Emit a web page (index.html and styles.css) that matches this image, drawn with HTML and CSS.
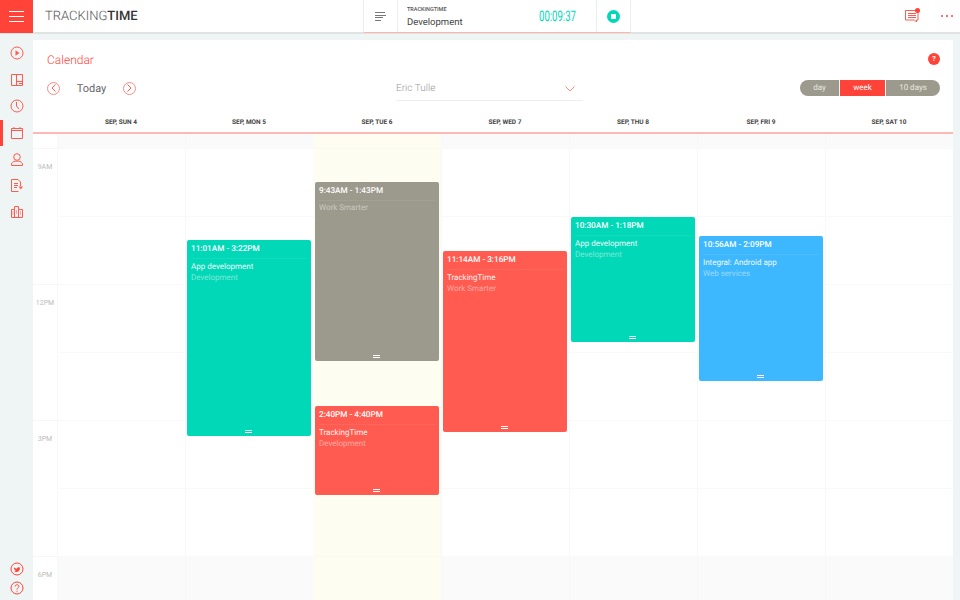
FILE: index.html
```html
<!DOCTYPE html>
<html lang="en">
<head>
  <meta charset="UTF-8" />
  <title>TrackingTime Calendar</title>
  <link rel="stylesheet" href="styles.css">
</head>
<body>

<!-- Top bar -->
<header class="topbar">
  <a class="menu-btn">
    <svg width="15" height="11" viewBox="0 0 15 11"><path d="M0 .5h15M0 5.500h15M0 10.500h15" stroke="#fff" stroke-width="1"/></svg>
  </a>
  <div class="logo">TRACKING<b>TIME</b></div>
  <div class="timer">
    <div class="timer-list">
      <svg width="11" height="9" viewBox="0 0 11 9"><path d="M0 .5h10M0 3.500h11M0 5.500h8M0 8.500h6" stroke="#777" stroke-width="1"/></svg>
    </div>
    <div class="timer-info">
      <div class="timer-project">TRACKINGTIME</div>
      <div class="timer-task">Development</div>
    </div>
    <div class="timer-clock">00:09:37</div>
    <div class="timer-stop"><span class="stop-dot"><span class="stop-square"></span></span></div>
  </div>
  <div class="top-actions">
    <span class="notes">
      <svg width="14" height="13" viewBox="0 0 14 13"><path d="M.5.5h12.500v9.500h-1.500v2l-2-2H.5zM3 3.500h8M3 5.500h8M3 7.500h8" fill="none" stroke="#ff5b50" stroke-width="1"/></svg>
      <span class="notes-dot"></span>
    </span>
    <span class="more"><i></i><i></i><i></i></span>
  </div>
</header>

<div class="main">
  <!-- Sidebar -->
  <nav class="sidebar">
    <a class="side-item">
      <svg width="14" height="14" viewBox="0 0 14 14"><circle cx="7" cy="7" r="6" fill="none" stroke="#ff5b50"/><path d="M5.500 4.200l4 2.800-4 2.800z" fill="#ff5b50"/></svg>
    </a>
    <a class="side-item">
      <svg width="12" height="12" viewBox="0 0 12 12"><path d="M.5.5h11v11H.5zM5.500.5v11M5.500 7.500h6M8 9.500h3.500" fill="none" stroke="#ff5b50"/></svg>
    </a>
    <a class="side-item">
      <svg width="14" height="14" viewBox="0 0 14 14"><circle cx="7" cy="7" r="6" fill="none" stroke="#ff5b50"/><path d="M6.500 3v4l2.500 3" fill="none" stroke="#ff5b50"/></svg>
    </a>
    <a class="side-item active">
      <svg width="12" height="12" viewBox="0 0 12 12"><path d="M.5 1.500h11v10H.5zM.5 3.500h11M3 0v2M9 0v2" fill="none" stroke="#ff5b50"/></svg>
    </a>
    <a class="side-item">
      <svg width="12" height="13" viewBox="0 0 12 13"><circle cx="6" cy="4" r="3.300" fill="none" stroke="#ff5b50"/><path d="M.5 12.500v-1.500c0-1.500 2-2.500 3.500-2.800h4c1.500.3 3.500 1.300 3.500 2.800v1.500z" fill="none" stroke="#ff5b50"/></svg>
    </a>
    <a class="side-item">
      <svg width="12" height="13" viewBox="0 0 12 13"><path d="M9.500 7V3L7 .5H.5v12h7M3 4.500h4M3 6.500h4M3 8.500h3" fill="none" stroke="#ff5b50"/><path d="M7.500 7.500h4.500l-2.200 3z" fill="#ff5b50"/></svg>
    </a>
    <a class="side-item">
      <svg width="12" height="12" viewBox="0 0 12 12"><path d="M.5 11.500v-8h3v-3h4v3h4v8zM3.500 3.500v8M7.500 3.500v8M1.500 6h1M1.500 8h1M5 5h1M5 7h1M9 6h1M9 8h1" fill="none" stroke="#ff5b50"/></svg>
    </a>
    <div class="side-bottom">
      <svg width="14" height="14" viewBox="0 0 14 14"><circle cx="7" cy="7" r="6" fill="none" stroke="#ff4338"/><path d="M3.800 5c1 1.100 2 1.700 3.200 1.700 0-1.300 1.600-2 2.500-1l1-.4-.6 1c0 2.200-1.700 3.700-3.600 3.700-.9 0-1.700-.3-2.300-.7 1 0 1.600-.2 2.100-.7-1 0-1.500-.5-1.800-1.200h.8c-.9-.4-1.300-1-1.300-1.700l.7.200c-.7-.6-.9-1.300-.7-1.900z" fill="#ff4338"/></svg>
      <svg width="14" height="14" viewBox="0 0 14 14"><circle cx="7" cy="7" r="6" fill="none" stroke="#ff4338"/><path d="M5.200 5.500c0-2.300 3.600-2.300 3.600 0 0 1.400-1.800 1.500-1.800 3M7 9.700v1" fill="none" stroke="#ff4338"/></svg>
    </div>
  </nav>

  <!-- Calendar card -->
  <section class="card">
    <div class="card-head">
      <h1 class="card-title">Calendar</h1>
      <span class="help">?</span>
    </div>
    <div class="toolbar">
      <div class="date-nav">
        <span class="round-btn">
          <svg width="5" height="8" viewBox="0 0 5 8"><path d="M4.500.5L1 4l3.500 3.500" fill="none" stroke="#ff5b50"/></svg>
        </span>
        <span class="today">Today</span>
        <span class="round-btn">
          <svg width="5" height="8" viewBox="0 0 5 8"><path d="M.5.5L4 4 .5 7.500" fill="none" stroke="#ff5b50"/></svg>
        </span>
      </div>
      <div class="user-select">
        <span>Eric Tulle</span>
        <svg width="10" height="6" viewBox="0 0 10 6"><path d="M.5.500L5 5 9.500.500" fill="none" stroke="#ff8a82"/></svg>
      </div>
      <div class="range">
        <span class="range-day">day</span>
        <span class="range-week">week</span>
        <span class="range-ten">10 days</span>
      </div>
    </div>

    <div class="day-heads">
      <div class="gutter"></div>
      <div>SEP, SUN 4</div>
      <div>SEP, MON 5</div>
      <div>SEP, TUE 6</div>
      <div>SEP, WED 7</div>
      <div>SEP, THU 8</div>
      <div>SEP, FRI 9</div>
      <div>SEP, SAT 10</div>
    </div>

    <div class="grid">
      <div class="hours">
        <div class="hour">9AM</div>
        <div class="hour">12PM</div>
        <div class="hour">3PM</div>
        <div class="hour">6PM</div>
      </div>
      <div class="day"></div>
      <div class="day">
        <div class="event teal ev-mon">
          <div class="ev-time">11:01AM - 3:22PM</div>
          <div class="ev-name">App development</div>
          <div class="ev-sub">Development</div>
          <div class="ev-grip"></div>
        </div>
      </div>
      <div class="day today-col">
        <div class="event gray ev-tue1">
          <div class="ev-time">9:43AM - 1:43PM</div>
          <div class="ev-sub ev-first">Work Smarter</div>
          <div class="ev-grip"></div>
        </div>
        <div class="event red ev-tue2">
          <div class="ev-time">2:40PM - 4:40PM</div>
          <div class="ev-name">TrackingTime</div>
          <div class="ev-sub">Development</div>
          <div class="ev-grip"></div>
        </div>
      </div>
      <div class="day">
        <div class="event red ev-wed">
          <div class="ev-time">11:14AM - 3:16PM</div>
          <div class="ev-name">TrackingTime</div>
          <div class="ev-sub">Work Smarter</div>
          <div class="ev-grip"></div>
        </div>
      </div>
      <div class="day">
        <div class="event teal ev-thu">
          <div class="ev-time">10:30AM - 1:18PM</div>
          <div class="ev-name">App development</div>
          <div class="ev-sub">Development</div>
          <div class="ev-grip"></div>
        </div>
      </div>
      <div class="day">
        <div class="event blue ev-fri">
          <div class="ev-time">10:56AM - 2:09PM</div>
          <div class="ev-name">Integral: Android app</div>
          <div class="ev-sub">Web services</div>
          <div class="ev-grip"></div>
        </div>
      </div>
      <div class="day"></div>
    </div>
  </section>
</div>

</body>
</html>
```

FILE: styles.css
```css
body {
  margin: 0;
  height: 600px;
  overflow: hidden;
  font-family: Roboto, "Liberation Sans", sans-serif;
  text-rendering: geometricPrecision;
  background: #eff4f4;
  color: #555;
}

/* top bar */
.topbar {
  display: flex;
  height: 32px;
  background: #fff;
  border-bottom: 2px solid #dfe3e2;
}
.menu-btn {
  width: 33px;
  height: 33px;
  background: #ff4338;
  display: flex;
  align-items: center;
  justify-content: center;
  flex: none;
}
.logo {
  margin-left: 12px;
  width: 318px;
  line-height: 33px;
  font-size: 13px;
  font-weight: 300;
  color: #555;
}
.logo b {
  font-weight: 500;
  color: #333;
}
.timer {
  display: flex;
  width: 268px;
  height: 33px;
  box-sizing: border-box;
  border-left: 1px solid #eceeee;
  border-right: 1px solid #eceeee;
  border-bottom: 1px solid #ffb4ae;
  background: #fff;
}
.timer-list {
  width: 33px;
  display: flex;
  align-items: center;
  justify-content: center;
  border-right: 1px solid #eceeee;
  flex: none;
}
.timer-info {
  width: 132px;
  padding: 7px 0 0 9px;
}
.timer-project {
  font-size: 5.5px;
  font-weight: 500;
  color: #555;
  line-height: 7px;
}
.timer-task {
  font-size: 9.5px;
  line-height: 14px;
  margin-top: 2px;
  color: #444;
}
.timer-clock {
  width: 39px;
  line-height: 33px;
  font-size: 14.5px;
  color: #00d8b8;
  transform: scaleX(0.66);
  transform-origin: left center;
  white-space: nowrap;
}
.timer-stop {
  width: 33px;
  margin-left: auto;
  display: flex;
  align-items: center;
  justify-content: center;
  border-left: 1px solid #eceeee;
}
.stop-dot {
  width: 13px;
  height: 13px;
  border-radius: 50%;
  background: #00d8b8;
  display: flex;
  align-items: center;
  justify-content: center;
}
.stop-square {
  width: 5px;
  height: 5px;
  background: #fff;
}
.top-actions {
  margin-left: auto;
  display: flex;
  align-items: center;
  padding-right: 7px;
}
.notes {
  position: relative;
  display: flex;
  margin-right: 22px;
}
.notes-dot {
  position: absolute;
  top: -2px;
  right: -1px;
  width: 5px;
  height: 5px;
  border-radius: 50%;
  background: #ff4338;
}
.more {
  display: flex;
  gap: 3px;
}
.more i {
  width: 2px;
  height: 2px;
  border-radius: 50%;
  background: #ff4338;
}

/* layout */
.main {
  display: flex;
  height: 566px;
}
.sidebar {
  width: 33px;
  flex: none;
  padding-top: 6px;
  display: flex;
  flex-direction: column;
  box-sizing: border-box;
}
.side-item {
  height: 26.5px;
  display: flex;
  align-items: center;
  justify-content: center;
}
.side-item.active {
  border-left: 3px solid #ff4338;
  box-sizing: border-box;
  padding-right: 3px;
}
.side-bottom {
  margin-top: auto;
  padding-bottom: 5px;
  display: flex;
  flex-direction: column;
  align-items: center;
  gap: 5px;
}

/* calendar card */
.card {
  width: 920px;
  height: 560px;
  margin-top: 6px;
  background: #fff;
  display: flex;
  flex-direction: column;
  overflow: hidden;
}
.card-head {
  flex: none;
  display: flex;
  justify-content: space-between;
  align-items: center;
  height: 40px;
  padding: 0 13px 0 14px;
}
.card-title {
  margin: 0;
  font-size: 12px;
  font-weight: 300;
  color: #ff4338;
}
.help {
  width: 12px;
  height: 12px;
  margin-top: -2px;
  border-radius: 50%;
  background: #ff4338;
  color: #fff;
  font-size: 7px;
  font-weight: 700;
  line-height: 12px;
  text-align: center;
}
.toolbar {
  flex: none;
  display: flex;
  align-items: center;
  height: 16px;
  padding: 0 13px 0 14px;
}
.date-nav {
  display: flex;
  align-items: center;
  width: 349px;
}
.round-btn {
  width: 13px;
  height: 13px;
  box-sizing: border-box;
  border: 1px solid #ff8a82;
  border-radius: 50%;
  display: flex;
  align-items: center;
  justify-content: center;
}
.today {
  width: 63px;
  text-align: center;
  font-size: 11px;
  color: #666;
}
.user-select {
  width: 187px;
  height: 26px;
  flex: none;
  box-sizing: border-box;
  border-bottom: 1px solid #eeeeea;
  display: flex;
  align-items: center;
  justify-content: space-between;
  padding: 2px 8px 0 0;
  font-size: 10px;
  font-weight: 300;
  color: #999;
}
.range {
  margin-left: auto;
  display: flex;
  height: 16px;
  line-height: 16px;
  font-size: 8px;
  color: #e8e8e0;
  text-align: center;
  border-radius: 8px;
  overflow: hidden;
}
.range span {
  background: #9b9a8c;
}
.range-day {
  width: 39px;
}
.range-week {
  width: 45px;
  margin: 0 1px 0 1px;
  background: #ff4338 !important;
  color: #fff;
}
.range-ten {
  width: 54px;
}

.day-heads {
  flex: none;
  display: flex;
  height: 20px;
  margin-top: 16px;
  border-bottom: 2px solid #ffb9b4;
  line-height: 20px;
  font-size: 6.5px;
  font-weight: 700;
  color: #444;
  text-align: center;
}
.day-heads div {
  width: 128px;
}
.day-heads .gutter {
  width: 24px;
}

/* grid */
.grid {
  display: flex;
  flex: 1;
  min-height: 0;
  overflow: hidden;
}
.hours {
  width: 24px;
  flex: none;
  padding-top: 14px;
}
.hour {
  height: 136px;
  box-sizing: border-box;
  border-top: 1px solid #f6f6f6;
  padding-top: 13px;
  text-align: center;
  font-size: 7px;
  line-height: 10px;
  color: #bbb;
}
.day {
  width: 128px;
  position: relative;
  box-sizing: border-box;
  border-left: 1px solid #f8f8f8;
  background:
    linear-gradient(#fafafa, #fafafa) 0 0 / 100% 14px no-repeat,
    linear-gradient(#fafafa, #fafafa) 0 422px / 100% 100% no-repeat,
    repeating-linear-gradient(#f9f9f9 0, #f9f9f9 1px, transparent 1px, transparent 68px) 0 14px;
}
.today-col {
  border-left-color: #fdfdf2;
  background:
    repeating-linear-gradient(#fafaef 0, #fafaef 1px, transparent 1px, transparent 68px) 0 14px,
    #fdfdf2;
}

/* events */
.event {
  position: absolute;
  left: 1px;
  width: 124px;
  box-sizing: border-box;
  border-radius: 2px;
  padding: 0 4px;
  color: #fff;
  font-size: 8px;
}
.teal { background: #00d8b8; }
.gray { background: #9b9a8c; }
.red { background: #ff5b50; }
.blue { background: #3db8ff; }
.ev-time {
  height: 18px;
  line-height: 18px;
  font-size: 8.2px;
  font-weight: 500;
  border-bottom: 1px solid rgba(255, 255, 255, 0.08);
}
.ev-name {
  margin-top: 2px;
  line-height: 12px;
  opacity: 0.92;
}
.ev-sub {
  line-height: 10px;
  opacity: 0.45;
}
.ev-first {
  margin-top: 1px;
  line-height: 11px;
}
.ev-grip {
  position: absolute;
  left: 58px;
  bottom: 3px;
  width: 7px;
  height: 1px;
  border-top: 1px solid #fff;
  border-bottom: 1px solid #fff;
}
.ev-mon { top: 106px; height: 196px; }
.ev-tue1 { top: 48px; height: 179px; }
.ev-tue2 { top: 272px; height: 89px; }
.ev-wed { top: 117px; height: 181px; }
.ev-thu { top: 83px; height: 125px; }
.ev-fri { top: 102px; height: 145px; }
```
